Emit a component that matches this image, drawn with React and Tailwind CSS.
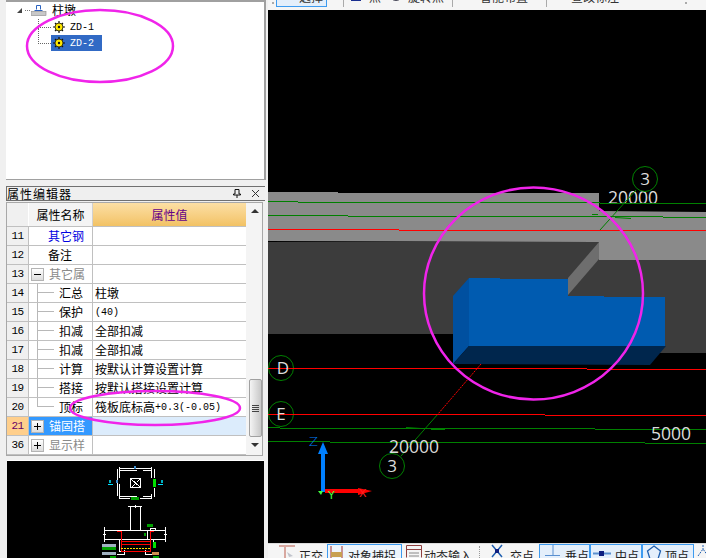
import React from 'react';

const rows = [
  { no: '11', name: '其它钢', tone: 'text-[#0000e0]', indent: 'pl-[19px]' },
  { no: '12', name: '备注', indent: 'pl-[19px]' },
  { no: '13', name: '其它属', tone: 'text-[#8a8a8a]', box: '-' },
  { no: '14', name: '汇总', value: '柱墩', leaf: true },
  { no: '15', name: '保护', mono: '(40)', leaf: true },
  { no: '16', name: '扣减', value: '全部扣减', leaf: true },
  { no: '17', name: '扣减', value: '全部扣减', leaf: true },
  { no: '18', name: '计算', value: '按默认计算设置计算', leaf: true },
  { no: '19', name: '搭接', value: '按默认搭接设置计算', leaf: true },
  { no: '20', name: '顶标', value: '筏板底标高', mono: '+0.3(-0.05)', leaf: true, last: true },
  { no: '21', name: '锚固搭', box: '+', active: true },
  { no: '36', name: '显示样', tone: 'text-[#8a8a8a]', box: '+' },
];

function TreeBox({ sign }) {
  return (
    <span className="ml-[2px] mr-[5px] w-[13px] h-[13px] shrink-0 border border-[#b4b4b4] bg-gradient-to-b from-white to-[#dcdcdc] flex items-center justify-center">
      <span className="w-[7px] h-[7px] flex items-center justify-center relative">
        <span className="w-[7px] h-px bg-black" />
        {sign === '+' && <span className="absolute left-[3px] top-0 w-px h-[7px] bg-black" />}
      </span>
    </span>
  );
}

function PropRow({ row }) {
  return (
    <div className="grid grid-cols-[22px_64px_153px] h-[19px] border-b border-[#c0c0c0]">
      <div className={`border-r border-[#c0c0c0] flex items-center justify-center font-['Liberation_Mono',monospace] text-[11px] tracking-[-0.6px] ${row.active ? 'bg-[#ffcf8c] text-[#660066]' : 'bg-[#f0f0f0] text-black'}`}>
        {row.no}
      </div>
      <div className={`border-r border-[#c0c0c0] flex items-center overflow-hidden whitespace-nowrap ${row.active ? 'bg-[#3399ff] text-white' : 'bg-white'} ${row.tone || ''} ${row.indent || ''}`}>
        {row.box && <TreeBox sign={row.box} />}
        {row.leaf && (
          <span className="ml-[8px] mr-[5px] w-[17px] h-full shrink-0 flex flex-col">
            <span className="h-[9px] border-l border-b border-[#b8b8b8]" />
            {!row.last && <span className="flex-1 border-l border-[#b8b8b8]" />}
          </span>
        )}
        {row.name}
      </div>
      <div className={`pl-[2px] flex items-center whitespace-nowrap ${row.active ? 'bg-[#dcecfc]' : 'bg-white'}`}>
        {row.value}
        {row.mono && <span className="font-['Liberation_Mono',monospace] text-[10px]">{row.mono}</span>}
      </div>
    </div>
  );
}

function Gear({ className }) {
  return (
    <svg className={className} width="12" height="12" viewBox="0 0 12 12">
      <path d="M6 0v12M0 6h12M2 2l8 8M10 2l-8 8" stroke="#111" strokeWidth="1.200" />
      <circle cx="6" cy="6" r="4" fill="#ffe800" stroke="#111" strokeWidth="0.8" />
      <circle cx="6" cy="6" r="1.200" fill="#111" />
    </svg>
  );
}

function TreePanel() {
  return (
    <div className="ml-[6px] w-[260px] h-[180px] bg-white border-t-2 border-r-2 border-b border-[#a0a0a0] pl-[11px] pt-[1px] text-[12px] text-black">
      <div className="flex items-center h-[14px]">
        <span className="w-0 h-0 border-l-[5px] border-l-transparent border-b-[5px] border-b-[#444]" />
        <span className="ml-[3px] w-[5px] border-t border-dotted border-[#777]" />
        <svg className="ml-[1px]" width="16" height="12" viewBox="0 0 16 12">
          <path d="M5.500 5.500V1.500h4v4M3.500 6.500h8" fill="none" stroke="#2a62c0" />
          <rect x="0" y="7.500" width="15" height="4" fill="#c8c8c8" stroke="#888" strokeWidth="0.6" />
        </svg>
        <span className="ml-[5px] leading-[14px]">柱墩</span>
      </div>
      <div className="ml-[21px] mt-[2px] flex">
        <div className="w-[13px] flex flex-col">
          <span className="h-[9px] w-[13px] border-l border-b border-dotted border-[#666]" />
          <span className="h-[16px] w-[13px] border-l border-b border-dotted border-[#666]" />
        </div>
        <div className="flex flex-col">
          <div className="h-[16px] flex items-center pl-[2px] w-[51px]">
            <Gear />
            <span className="ml-[5px] font-['Liberation_Mono',monospace] text-[10px]">ZD-1</span>
          </div>
          <div className="h-[16px] flex items-center pl-[2px] w-[51px] bg-[#316ac5] text-white">
            <Gear />
            <span className="ml-[5px] font-['Liberation_Mono',monospace] text-[10px]">ZD-2</span>
          </div>
        </div>
      </div>
    </div>
  );
}

function PropEditor() {
  return (
    <div className="ml-[6px] mt-[6px] w-[259px]">
      <div className="h-[15px] border-t border-l border-b border-[#707070] bg-[#efefef] flex items-center text-[12px] leading-none pr-[5px]">
        <span className="tracking-[1px]">属性编辑器</span>
        <svg className="ml-auto" width="8" height="9" viewBox="0 0 8 9">
          <path d="M2 .500h4v4.500h1.500v1H.500V5H2zM4 6v3" fill="none" stroke="#111" />
        </svg>
        <svg className="ml-[10px]" width="9" height="9" viewBox="0 0 9 9">
          <path d="M1 1l7 7M8 1L1 8" stroke="#333" />
        </svg>
      </div>
      <div className="mt-[1px] h-[254px] w-[257px] border border-[#a8a8a8] bg-[#f4f4f4] flex items-start">
        <div className="w-[239px] shrink-0">
          <div className="grid grid-cols-[22px_64px_153px] h-[24px] border-b border-[#c0c0c0]">
            <div className="bg-[#f0f0f0] border-r border-white" />
            <div className="bg-[#f4f4f4] border-r border-[#d0d0d0] flex items-center justify-center">属性名称</div>
            <div className="bg-gradient-to-b from-[#fcdfa4] to-[#f2c264] flex items-center justify-center text-[#660088]">属性值</div>
          </div>
          {rows.map((row) => <PropRow key={row.no} row={row} />)}
        </div>
        <div className="ml-[2px] w-[14px] h-[251px] flex flex-col items-center">
          <span className="mt-[6px] w-0 h-0 border-x-[4px] border-x-transparent border-b-[4px] border-b-[#333]" />
          <div className="mt-[166px] w-[13px] h-[58px] rounded-[2px] border border-[#a0a0a0] bg-gradient-to-r from-[#f4f4f4] to-[#c8c8c8] flex flex-col items-center justify-center gap-px">
            <span className="w-[7px] h-px bg-[#444]" />
            <span className="w-[7px] h-px bg-[#444]" />
            <span className="w-[7px] h-px bg-[#444]" />
            <span className="w-[7px] h-px bg-[#444]" />
          </div>
          <span className="mt-[6px] w-0 h-0 border-x-[4px] border-x-transparent border-t-[4px] border-t-[#333]" />
        </div>
      </div>
    </div>
  );
}

function Preview() {
  return (
    <div className="ml-[7px] mt-[4px] w-[257px] h-[98px] bg-black border-t border-white">
      <svg className="block" width="257" height="98" viewBox="7 460 257 98">
        <g stroke="#fff" strokeWidth="1" fill="none" shapeRendering="crispEdges">
          <path d="M119 467.500h33M119 469.500h18M143 469.500h9M119 495.500h18M119 497.500h11M140 497.500h12M143 495.500h9" />
          <path d="M119.500 466v11M119.500 483v15M151.500 466v11M151.500 493v5M117.500 468v27M154.500 468v9M154.500 487v9" />
          <rect x="130.500" y="477.500" width="10" height="9" />
          <path d="M131 478l9 8M132 486l3-3M137 481l3-3" />
          <path d="M128 505.500h14M135.500 504v3M130.500 505v24M140.500 505v24" />
          <path d="M104 529.500h62M104 538.500h62M104.500 526v15M165.500 526v15M103 533.500h3M164 533.500h3" />
          <path d="M119.500 538v12M119 550.500h5M124.500 549v5M117 553.500h8M145 553.500h8M145.500 549v5M145 550.500h6M147.500 529v9M150.500 527.500h5M150.500 527v3M155.500 527v3M153.500 538v3" />
        </g>
        <g stroke="#f00" strokeWidth="1" fill="none" shapeRendering="crispEdges">
          <path d="M117 530.500h4.500v19M150.500 530v21M154 530.500h-4M121 540.500h30M121 543.500h30M121 550.500h30" />
        </g>
        <path d="M121 547.500h29" stroke="#ffe000" strokeDasharray="1.500 1.500" shapeRendering="crispEdges" />
        <g fill="#00a000">
          <rect x="153" y="478" width="3" height="8" fill="#00e000" />
          <rect x="131" y="496" width="8" height="3" />
          <rect x="147" y="523" width="6" height="3" />
          <rect x="144" y="532" width="2" height="3" />
          <rect x="153" y="541" width="3" height="6" fill="#00e000" />
          <rect x="102" y="546" width="14" height="3" />
          <rect x="110" y="555" width="6" height="3" />
          <rect x="153" y="555" width="6" height="3" />
        </g>
        <g>
          <rect x="108" y="483" width="5" height="1" fill="#00e0ff" />
          <rect x="158" y="483" width="5" height="1" fill="#00e0ff" />
          <rect x="109" y="479" width="2" height="3" fill="#00b0c0" />
          <rect x="161" y="479" width="2" height="3" fill="#00b0c0" />
          <rect x="116" y="479" width="2" height="3" fill="#4090d0" />
          <rect x="134" y="465" width="2" height="3" fill="#4090d0" />
          <rect x="102" y="543" width="14" height="3" fill="#a0b0c0" />
          <rect x="102" y="551" width="14" height="3" fill="#a0b0c0" />
          <rect x="152" y="551" width="7" height="3" fill="#d09050" />
          <rect x="132" y="557" width="8" height="1" fill="#4090d0" />
        </g>
      </svg>
    </div>
  );
}

function ToolItem({ icon, label, on, className = '' }) {
  return (
    <div className={`h-[20px] shrink-0 flex items-center whitespace-nowrap ${on ? 'border border-[#3d9bf0] bg-[#e4effb]' : ''} ${className}`}>
      {icon}
      <span>{label}</span>
    </div>
  );
}

function TopBar() {
  return (
    <div className="h-[10px] bg-[#f5f5f5] overflow-hidden flex items-start text-[12px] relative">
      <div className="-mt-[13px] flex text-[#333]">
        <ToolItem on className="ml-[8px] w-[51px] pl-[22px]" label="选择" />
        <span className="ml-[16px] w-px h-[20px] bg-[#aaa]" />
        <ToolItem className="ml-[7px] w-[29px] pl-[18px]" label="点" icon={<span className="absolute ml-[-18px] mt-[-2px] w-[10px] h-[10px] border border-[#1a2f90]" />} />
        <ToolItem className="ml-[9px] w-[56px] pl-[19px]" label="旋转点" icon={<span className="absolute ml-[-19px] mt-[-6px] w-[14px] h-[14px] rounded-full border border-[#445]" />} />
        <span className="ml-[7px] w-px h-[20px] bg-[#aaa]" />
        <ToolItem className="ml-[5px] w-[72px] pl-[22px]" label="智能布置" icon={<span className="absolute ml-[-22px] mt-[-1px] w-[15px] h-[7px] bg-[#8a9ab0]" />} />
        <span className="ml-[16px] w-px h-[20px] bg-[#aaa]" />
        <ToolItem className="ml-[5px] w-[66px] pl-[19px]" label="查改标注" icon={<span className="absolute ml-[-19px] mt-[-1px] w-[12px] h-[7px] bg-[#5a7ab0]" />} />
      </div>
      <span className="absolute left-[4px] top-[2px] w-[2px] h-[2px] bg-[#aaa]" />
      <span className="absolute left-[417px] top-[2px] w-[2px] h-[2px] bg-[#aaa]" />
    </div>
  );
}

function BottomBar() {
  return (
    <div className="h-[15px] bg-[#f5f5f5] overflow-hidden flex items-start text-[12px] text-[#222] border-t border-[#dcdcdc]">
      <svg className="ml-[10px] shrink-0" width="18" height="14" viewBox="0 0 18 14">
        <path d="M1 2h16M7 2v12" stroke="#d8a8a0" strokeWidth="2" fill="none" />
        <path d="M9 8l6 4-4 1z" fill="#c0c4cc" />
      </svg>
      <span className="ml-[3px] mt-[3px] w-[28px] shrink-0">正交</span>
      <div className="w-[75px] h-[20px] border border-[#3d9bf0] bg-[#eef5fc] flex shrink-0">
        <svg className="shrink-0" width="18" height="14" viewBox="0 0 18 14">
          <path d="M3 1v13M14 1v13" stroke="#a03030" />
          <rect x="3" y="7" width="11" height="5" fill="#c8a050" />
        </svg>
        <span className="mt-[2px] ml-[2px]">对象捕捉</span>
      </div>
      <svg className="ml-[3px] shrink-0" width="18" height="14" viewBox="0 0 18 14">
        <path d="M1.500 1.500h15v12M1.500 1.500v12M1.500 5.500h15" stroke="#904040" fill="none" />
        <path d="M4 9h10M4 12h10" stroke="#888" />
      </svg>
      <span className="ml-[1px] mt-[3px] w-[55px] shrink-0">动态输入</span>
      <span className="mt-[2px] w-[2px] h-[12px] border-l border-dotted border-[#999] shrink-0" />
      <svg className="ml-[10px] shrink-0" width="12" height="14" viewBox="0 0 12 14">
        <path d="M1 1l10 12M11 1L1 13" stroke="#2060b0" strokeWidth="1.500" />
        <rect x="4" y="5" width="4" height="4" fill="#102080" />
      </svg>
      <span className="ml-[7px] mt-[3px] w-[29px] shrink-0">交点</span>
      <div className="w-[51px] h-[20px] border border-[#3d9bf0] bg-[#e4effb] flex shrink-0">
        <svg className="ml-[5px] shrink-0" width="15" height="14" viewBox="0 0 15 14">
          <path d="M8 0v10M0 10.500h15" stroke="#5a90d0" />
        </svg>
        <span className="ml-[5px] mt-[2px]">垂点</span>
      </div>
      <div className="w-[52px] h-[20px] border border-[#3d9bf0] bg-[#e4effb] flex shrink-0">
        <svg className="ml-[2px] shrink-0" width="18" height="14" viewBox="0 0 18 14">
          <path d="M0 8.500h18" stroke="#5a90d0" strokeWidth="2" />
          <rect x="6" y="6" width="5" height="5" fill="#102080" />
        </svg>
        <span className="ml-[4px] mt-[2px]">中点</span>
      </div>
      <div className="w-[52px] h-[20px] border border-[#3d9bf0] bg-[#e4effb] flex shrink-0">
        <svg className="ml-[3px] shrink-0" width="16" height="14" viewBox="0 0 16 14">
          <path d="M8 1l6.500 5-2.500 8H4L1.500 6z" fill="none" stroke="#2060b0" strokeWidth="1.300" />
        </svg>
        <span className="ml-[3px] mt-[2px]">顶点</span>
      </div>
      <svg className="ml-[3px] shrink-0" width="12" height="14" viewBox="0 0 12 14">
        <path d="M6 1v4M1 12l5-7 5 7" stroke="#2060b0" fill="none" strokeDasharray="2 1" />
      </svg>
    </div>
  );
}

const numFont = "'Open Sans', sans-serif";

function Scene() {
  return (
    <svg className="block w-[438px] h-[533px]" viewBox="268 10 438 533">
      <text x="608" y="204" fontFamily={numFont} fontSize="17.500" fill="#dcdcdc">20000</text>
      <path d="M268 192H338V193H599V211L706 212V260H599V242L268 241Z" fill="#8a8a8a" />
      <path d="M268 242H599V260H706V353H660L640 334H268Z" fill="#3c3c3c" />
      <path d="M599 242V259L568 295V278Z" fill="#6e6e6e" />
      <path d="M469 278H500V279H568V296L604 296V297H665V346H469Z" fill="#005bb0" />
      <path d="M453 296L469 278V346L453 364Z" fill="#0050a0" />
      <path d="M469 346H666L650 365L453 364Z" fill="#00264d" />

      <g stroke="#008000" strokeWidth="1" fill="none">
        <path d="M268 201.500H298M298 202.500H600M600 203.500H706" />
        <path d="M268 215.500H348M348 216.500H663M663 217.500H706M592 214.500H598M615 217.500L631 218.500" />
        <path d="M268 427.500H280M280 428.500H595M595 429.500H706M406 427.500L421 428.500M431 429.500H445" />
        <path d="M268 441.500H330M330 442.500H645M645 443.500H706" />
        <path d="M600 230L636 190M438 414L401 456" />
        <circle cx="645" cy="179" r="12.500" />
        <circle cx="281" cy="368" r="12.500" />
        <circle cx="281" cy="414" r="12.500" />
        <circle cx="392" cy="466" r="12.500" />
      </g>
      <g stroke="#ff0000" strokeWidth="1" fill="none">
        <path d="M268 229.500H399M399 230.500H706" />
        <path d="M268 368.500H587M587 369.500H706" />
        <path d="M268 414.500H545M545 415.500H706" />
        <path d="M481 364L438 414" strokeDasharray="2 1" />
      </g>

      <g fontFamily={numFont} fill="#dcdcdc">
        <text x="389" y="453" fontSize="17.500">20000</text>
        <text x="651" y="440" fontSize="17.500">5000</text>
        <text x="645" y="185" fontSize="17" textAnchor="middle">3</text>
        <text x="392" y="472" fontSize="17" textAnchor="middle">3</text>
        <text x="283" y="374" fontSize="17" textAnchor="middle">D</text>
        <text x="281" y="420" fontSize="17" textAnchor="middle">E</text>
      </g>

      <rect x="321" y="453" width="4" height="39" fill="#0080ff" />
      <path d="M323 442L318 454H328Z" fill="#0080ff" />
      <path d="M325 489h35v4h-35z" fill="#ff0000" />
      <path d="M358 488L372 491L358 495Z" fill="#ff0000" />
      <path d="M318 491h5l-2 4z" fill="#40ff40" />
      <text x="309" y="446" fontFamily="'DejaVu Sans', sans-serif" fontSize="13" fontWeight="200" fill="#0080ff">Z</text>
      <text x="328" y="499" fontFamily="'DejaVu Sans', sans-serif" fontSize="11" fill="#40ff40">Y</text>
      <text x="359" y="497" fontFamily="'DejaVu Sans', sans-serif" fontSize="11" fill="#ff2020">X</text>
    </svg>
  );
}

export default function App() {
  return (
    <div className="relative w-[706px] h-[558px] overflow-hidden bg-[#f0f0f0] flex font-['Noto_Sans_CJK_SC',sans-serif] text-[12px] text-black">
      <div className="w-[268px] shrink-0 flex flex-col">
        <TreePanel />
        <PropEditor />
        <Preview />
      </div>
      <div className="w-[438px] flex flex-col">
        <TopBar />
        <div className="h-[533px] bg-black"><Scene /></div>
        <BottomBar />
      </div>
      {/* hand-drawn annotation marks over the screenshot */}
      <svg className="absolute left-0 top-0 pointer-events-none" width="706" height="558" viewBox="0 0 706 558" fill="none" stroke="#f024ea" strokeWidth="2.500">
        <ellipse cx="100" cy="46" rx="73" ry="36" />
        <ellipse cx="155" cy="408" rx="85" ry="17" />
        <ellipse cx="533.500" cy="293.500" rx="109.500" ry="106" />
      </svg>
    </div>
  );
}
